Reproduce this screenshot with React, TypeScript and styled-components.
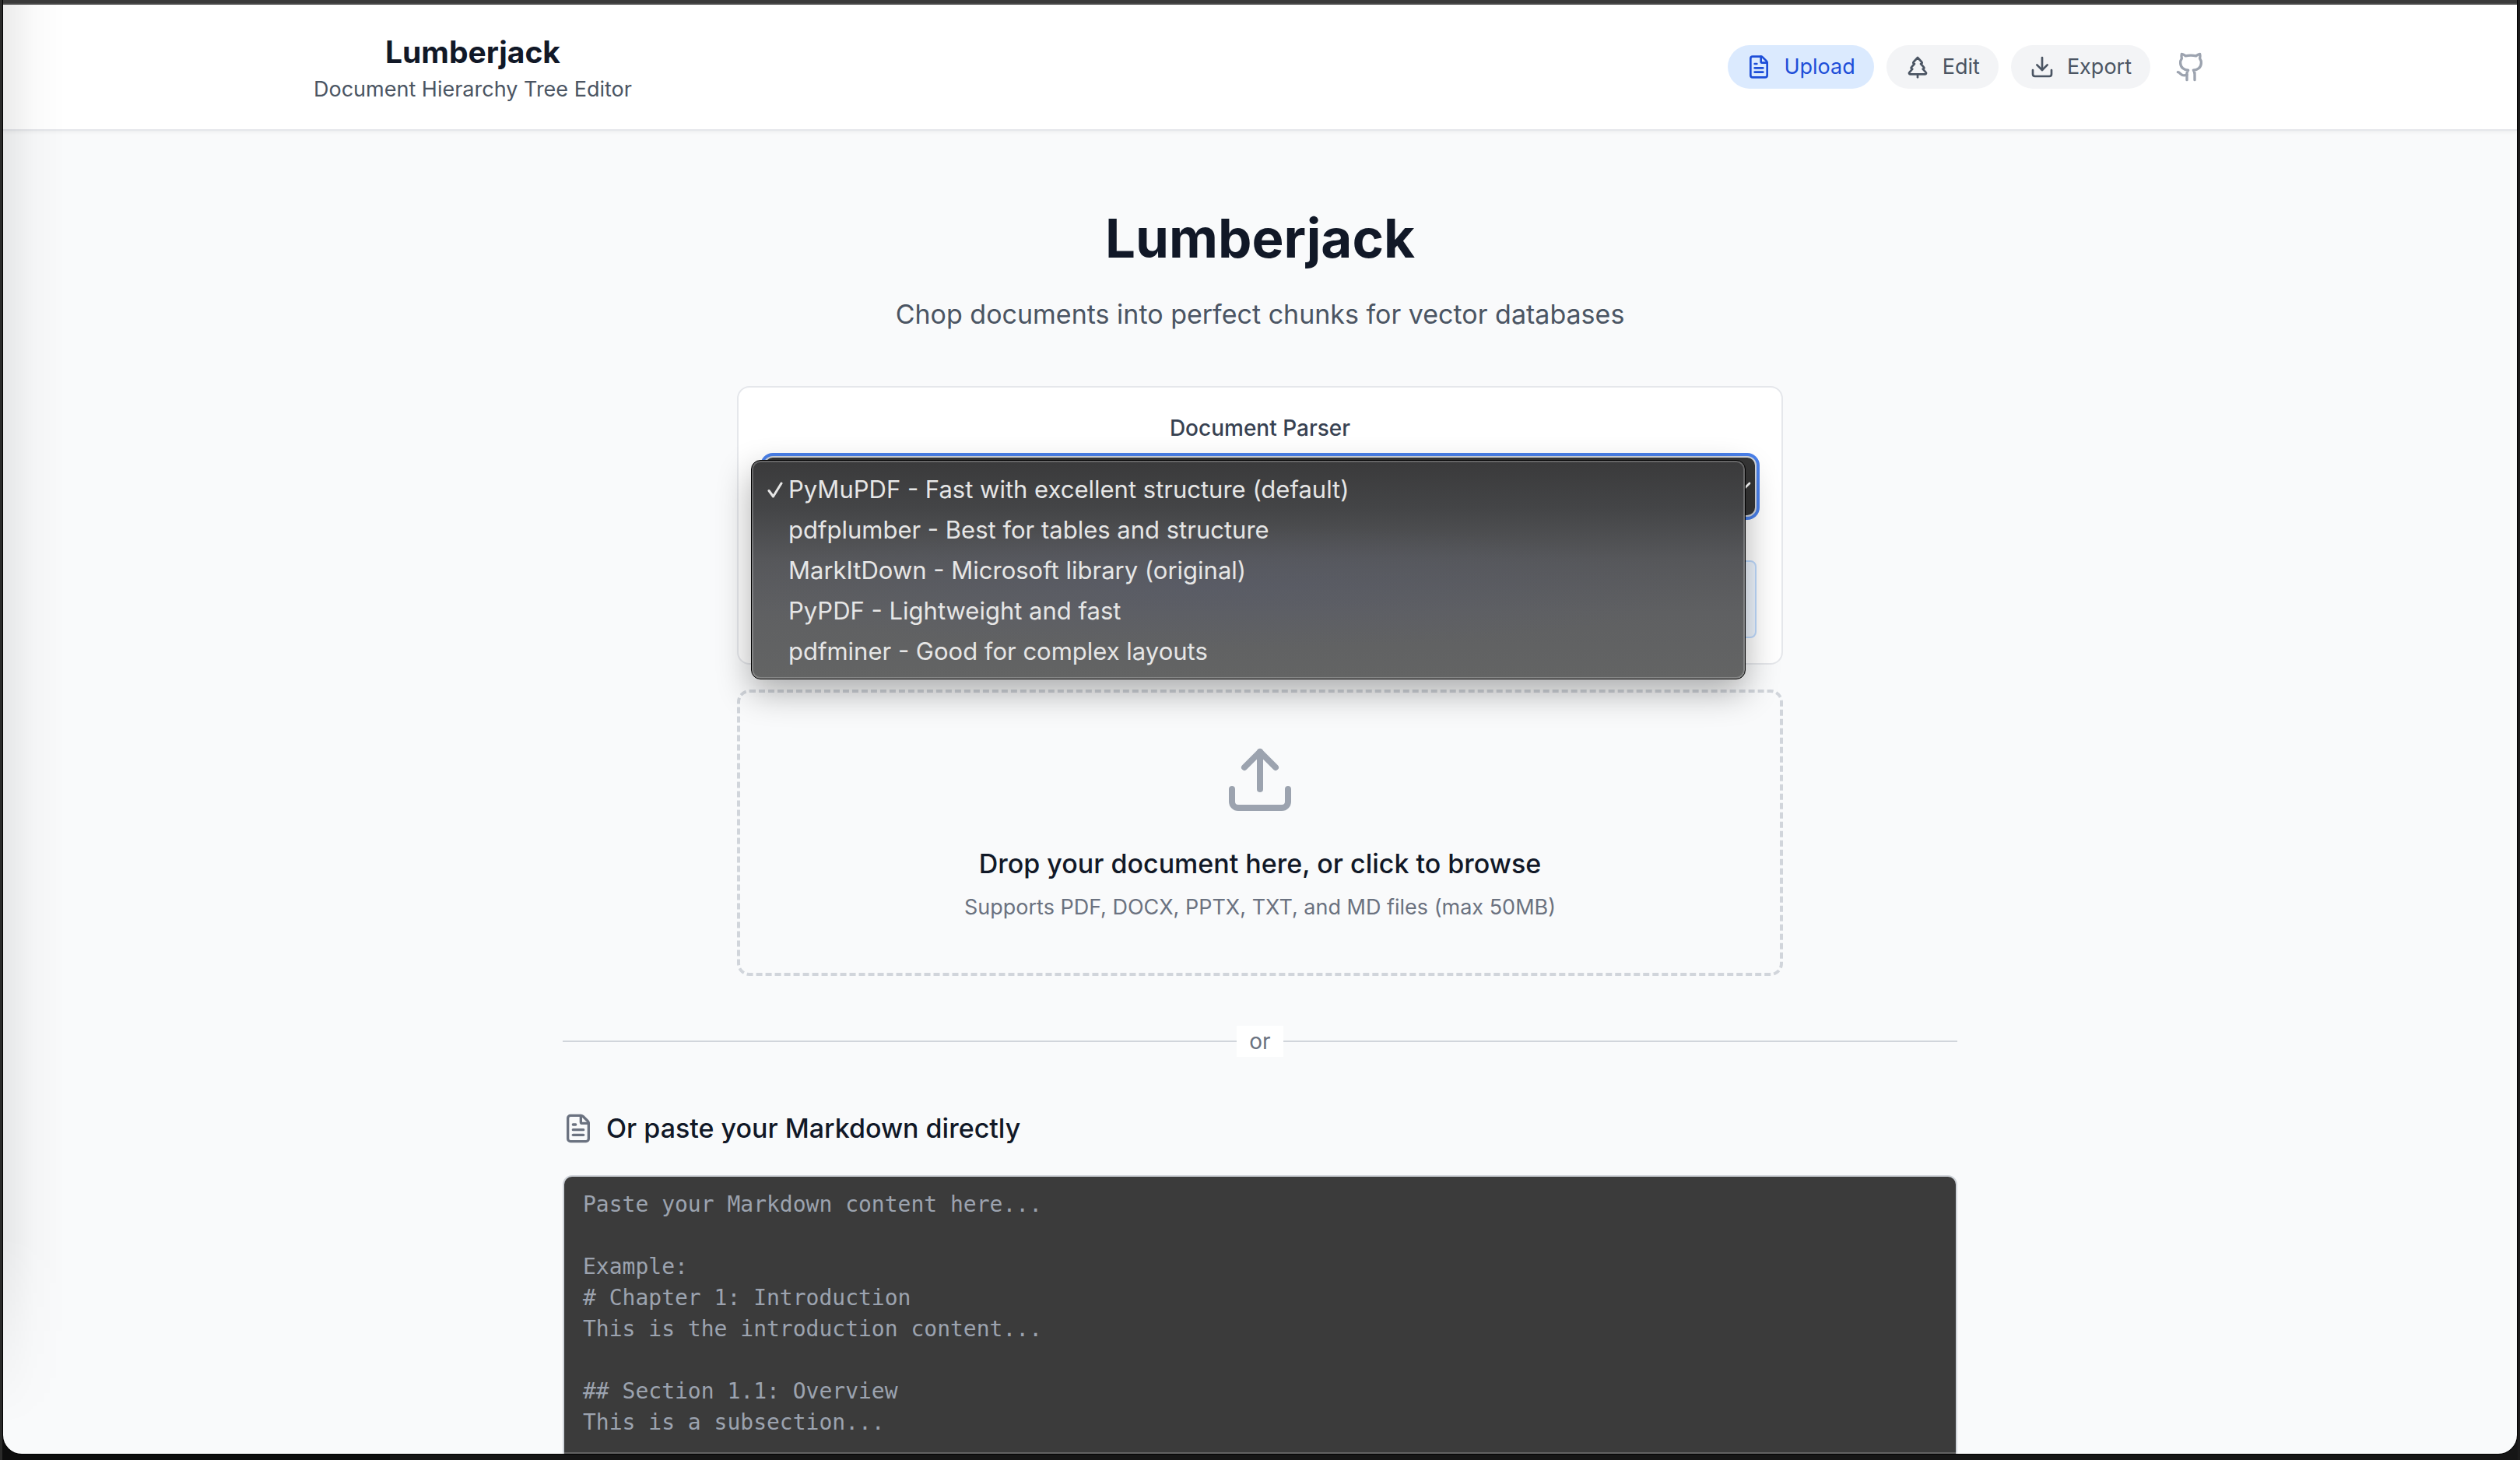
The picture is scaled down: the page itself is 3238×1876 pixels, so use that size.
import React from "react";
import styled, { createGlobalStyle } from "styled-components";
import { ChevronDown, Download, FileText, Github, TreePine, Upload } from "lucide-react";

const sans = `Inter, "Noto Sans", sans-serif`;
const mono = `"DejaVu Sans Mono", "Liberation Mono", monospace`;

const GlobalStyle = createGlobalStyle`
  *, *::before, *::after { box-sizing: border-box; }
  html, body { margin: 0; padding: 0; height: 100%; overflow: hidden; }
  body { background: #151515; font-family: ${sans}; color: #111827; }
  #root { height: 100%; }
  h1, h2, h3, p, ul { margin: 0; padding: 0; }
  button, select, textarea { font-family: inherit; margin: 0; }
`;

const Desktop = styled.div`
  display: flex;
  height: 100vh;
  padding: 0 1px 8px;
  border-left: 3px solid #2a2a29;
  border-right: 3px solid #1c1c1c;
  background: linear-gradient(90deg, #0d0d0d 498px, #161616 498px);
`;

const Window = styled.div`
  position: relative;
  flex: 1;
  min-width: 0;
  overflow: hidden;
  border-radius: 0 0 24px 24px;
  background: #f9fafb;
  box-shadow: 0 0 0 1px #000;

  &::after {
    content: "";
    position: absolute;
    inset: auto 0 0;
    height: 2px;
    background: rgba(255, 255, 255, 0.2);
  }
`;

const ChromeBar = styled.div`
  height: 6px;
  border-bottom: 2px solid #484848;
  background: #3a3a3a;
`;

const EdgeShade = styled.div`
  position: absolute;
  inset: 6px auto 0 0;
  width: 80px;
  pointer-events: none;
  background: linear-gradient(90deg, rgba(0, 0, 0, 0.08), rgba(0, 0, 0, 0.02) 50%, transparent);
  mask-image: linear-gradient(180deg, #000 85%, transparent 98%);
`;

const Header = styled.header`
  background: #fff;
  border-bottom: 2px solid #e5e7eb;
  box-shadow: 0 2px 4px rgba(0, 0, 0, 0.05);
`;

const HeaderInner = styled.div`
  display: flex;
  align-items: center;
  justify-content: space-between;
  max-width: 2560px;
  margin: 0 auto;
  padding: 32px 64px;
`;

const Brand = styled.div`
  text-align: center;
`;

const BrandName = styled.h1`
  font-size: 39px;
  line-height: 58px;
  font-weight: 700;
`;

const BrandTagline = styled.p`
  font-size: 27px;
  line-height: 38px;
  color: #4b5563;
`;

const Nav = styled.nav`
  display: flex;
  align-items: center;
  gap: 16px;
`;

const NavButton = styled.button<{ $active?: boolean }>`
  display: flex;
  align-items: center;
  gap: 16px;
  padding: 8px 24px;
  border: 0;
  border-radius: 28px;
  font-size: 27px;
  line-height: 40px;
  background: ${(p) => (p.$active ? "#dbeafe" : "#f3f4f6")};
  color: ${(p) => (p.$active ? "#1d4ed8" : "#4b5563")};
`;

const RepoLink = styled.a`
  display: flex;
  margin-left: 16px;
  color: #9ca3af;
`;

const Main = styled.main`
  max-width: 1792px;
  margin: 0 auto;
  padding-top: 98px;
`;

const Hero = styled.section`
  text-align: center;
  margin-bottom: 64px;
`;

const HeroTitle = styled.h2`
  font-size: 69px;
  line-height: 80px;
  font-weight: 700;
  margin-bottom: 30px;
`;

const HeroText = styled.p`
  font-size: 34px;
  line-height: 56px;
  color: #4b5563;
`;

const Narrow = styled.div`
  display: flex;
  flex-direction: column;
  gap: 32px;
  max-width: 1344px;
  margin: 0 auto;
`;

const ParserCard = styled.section`
  padding: 32px;
  border: 2px solid #e5e7eb;
  border-radius: 16px;
  background: #fff;
`;

const ParserLabel = styled.label`
  display: block;
  margin-bottom: 16px;
  font-size: 28px;
  line-height: 40px;
  font-weight: 500;
  text-align: center;
  color: #374151;
`;

const SelectWrap = styled.div`
  position: relative;
`;

const ParserSelect = styled.select`
  display: block;
  width: 100%;
  height: 78px;
  padding: 0 24px;
  appearance: none;
  border: 2px solid #d1d5db;
  border-radius: 12px;
  background: #363636;
  color: #fff;
  font-size: 28px;
  box-shadow: 0 0 0 4px #4a80ea;
`;

const SelectChevron = styled(ChevronDown)`
  position: absolute;
  top: 23px;
  right: 1px;
  color: #fff;
`;

const Menu = styled.ul`
  position: absolute;
  z-index: 2;
  top: 5px;
  left: -16px;
  right: 14px;
  padding: 11px 20px 9px;
  list-style: none;
  border: 1px solid #000;
  border-radius: 12px;
  background:
    radial-gradient(ellipse 640px 80px at 46% 58%, rgba(88, 92, 110, 0.45), transparent),
    linear-gradient(180deg, #3a3a3b 0%, #444547 22%, #56575a 45%, #5f6062 70%, #636464 100%);
  box-shadow:
    inset 0 0 0 2px rgba(255, 255, 255, 0.22),
    0 16px 44px rgba(0, 0, 0, 0.32);
`;

const MenuItem = styled.li`
  display: flex;
  align-items: center;
  font-size: 31px;
  line-height: 52px;
  color: #e6e6e6;
`;

const CheckSlot = styled.span`
  display: flex;
  width: 27px;
`;

const ParserNote = styled.div`
  height: 100px;
  margin-top: 56px;
  border: 2px solid #bfdbfe;
  border-radius: 8px;
  background: #eff6ff;
`;

const DropZone = styled.button`
  display: flex;
  flex-direction: column;
  align-items: center;
  width: 100%;
  padding: 64px;
  border: 4px dashed #d1d5db;
  border-radius: 16px;
  background: transparent;
  color: #9ca3af;
`;

const DropTitle = styled.span`
  margin-top: 32px;
  font-size: 34px;
  line-height: 56px;
  font-weight: 500;
  color: #111827;
`;

const DropHint = styled.span`
  margin-top: 8px;
  font-size: 27px;
  line-height: 40px;
  color: #6b7280;
`;

const Divider = styled.div`
  display: flex;
  align-items: center;
  margin: 64px 0;
  font-size: 28px;
  line-height: 40px;
  color: #6b7280;

  &::before,
  &::after {
    content: "";
    flex: 1;
    height: 2px;
    background: #d1d5db;
  }
`;

const DividerText = styled.span`
  padding: 0 16px;
  background: #fff;
`;

const PasteLabel = styled.label`
  display: flex;
  align-items: center;
  gap: 16px;
  margin-bottom: 32px;
  font-size: 34px;
  line-height: 56px;
  font-weight: 500;

  svg { color: #6b7280; }
`;

const PasteArea = styled.textarea`
  display: block;
  width: 100%;
  height: 512px;
  padding: 16px 24px;
  resize: none;
  border: 2px solid #d1d5db;
  border-radius: 12px;
  background: #3b3b3b;
  color: #fff;
  && { font-family: ${mono}; }
  font-size: 28px;
  line-height: 40px;

  &::placeholder { color: #9ca3af; opacity: 1; }
`;

const parsers = [
  "PyMuPDF - Fast with excellent structure (default)",
  "pdfplumber - Best for tables and structure",
  "MarkItDown - Microsoft library (original)",
  "PyPDF - Lightweight and fast",
  "pdfminer - Good for complex layouts",
];

const placeholder = `Paste your Markdown content here...

Example:
# Chapter 1: Introduction
This is the introduction content...

## Section 1.1: Overview
This is a subsection...`;

function CheckMark() {
  return (
    <svg width="20" height="24" viewBox="0 0 20 24" fill="none" aria-hidden="true">
      <path d="M2 13.5 7.5 21 18 4" stroke="currentColor" strokeWidth="3" strokeLinecap="round" strokeLinejoin="round" />
    </svg>
  );
}

function ParserPicker() {
  const [parser, setParser] = React.useState(parsers[0]);
  return (
    <ParserCard>
      <ParserLabel htmlFor="parser">Document Parser</ParserLabel>
      <SelectWrap>
        <ParserSelect id="parser" value={parser} onChange={(e) => setParser(e.target.value)}>
          {parsers.map((name) => (
            <option key={name}>{name}</option>
          ))}
        </ParserSelect>
        <SelectChevron size={32} strokeWidth={2} aria-hidden="true" />
        <Menu role="listbox" aria-label="Document Parser">
          {parsers.map((name) => (
            <MenuItem key={name} role="option" aria-selected={name === parser} onClick={() => setParser(name)}>
              <CheckSlot>{name === parser && <CheckMark />}</CheckSlot>
              {name}
            </MenuItem>
          ))}
        </Menu>
      </SelectWrap>
      <ParserNote />
    </ParserCard>
  );
}

export default function App() {
  return (
    <>
      <GlobalStyle />
      <Desktop>
        <Window>
          <ChromeBar />
          <Header>
            <HeaderInner>
              <Brand>
                <BrandName>Lumberjack</BrandName>
                <BrandTagline>Document Hierarchy Tree Editor</BrandTagline>
              </Brand>
              <Nav>
                <NavButton type="button" $active>
                  <FileText size={32} />
                  Upload
                </NavButton>
                <NavButton type="button">
                  <TreePine size={32} />
                  Edit
                </NavButton>
                <NavButton type="button">
                  <Download size={32} />
                  Export
                </NavButton>
                <RepoLink href="#" aria-label="GitHub repository">
                  <Github size={40} />
                </RepoLink>
              </Nav>
            </HeaderInner>
          </Header>
          <Main>
            <Hero>
              <HeroTitle>Lumberjack</HeroTitle>
              <HeroText>Chop documents into perfect chunks for vector databases</HeroText>
            </Hero>
            <Narrow>
              <ParserPicker />
              <DropZone type="button">
                <Upload size={96} />
                <DropTitle>Drop your document here, or click to browse</DropTitle>
                <DropHint>Supports PDF, DOCX, PPTX, TXT, and MD files (max 50MB)</DropHint>
              </DropZone>
            </Narrow>
            <Divider>
              <DividerText>or</DividerText>
            </Divider>
            <PasteLabel htmlFor="markdown">
              <FileText size={40} />
              Or paste your Markdown directly
            </PasteLabel>
            <PasteArea id="markdown" placeholder={placeholder} />
          </Main>
          <EdgeShade />
        </Window>
      </Desktop>
    </>
  );
}
